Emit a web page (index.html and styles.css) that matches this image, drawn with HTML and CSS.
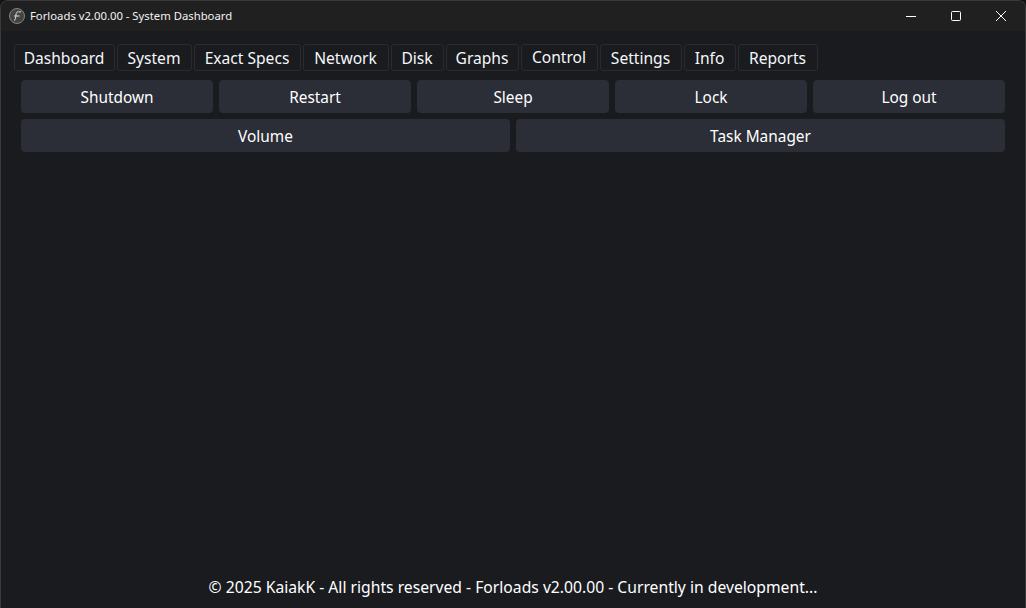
FILE: index.html
```html
<!DOCTYPE html>
<html lang="en">
<head>
<meta charset="utf-8">
<title>Forloads v2.00.00 - System Dashboard</title>
<link rel="stylesheet" href="styles.css">
</head>
<body>
<div class="window">
  <header class="titlebar">
    <svg class="app-icon" viewBox="0 0 16 16" width="16" height="16" aria-hidden="true">
      <circle cx="8" cy="8" r="7.5" fill="#444" stroke="#858585" stroke-width="1"/>
      <path d="M5 12.5C6 12.2 6.3 11.5 6.5 10.4L7.2 5.6C7.4 4.4 8 3.8 9.2 3.8H12.2M5.2 8H10.6" fill="none" stroke="#dcdcdc" stroke-width="1"/>
    </svg>
    <span class="title">Forloads v2.00.00 - System Dashboard</span>
    <div class="controls">
      <span class="control">
        <svg viewBox="0 0 12 12" width="12" height="12" aria-hidden="true"><path d="M1 6.5H11" stroke="#fff" stroke-width="1"/></svg>
      </span>
      <span class="control">
        <svg viewBox="0 0 12 12" width="12" height="12" aria-hidden="true"><rect x="1.5" y="1.5" width="9" height="9" rx="1" fill="none" stroke="#fff" stroke-width="1"/></svg>
      </span>
      <span class="control">
        <svg viewBox="0 0 12 12" width="12" height="12" aria-hidden="true"><path d="M1 1 11 11M11 1 1 11" stroke="#fff" stroke-width="1"/></svg>
      </span>
    </div>
  </header>
  <main class="content">
    <nav class="tabs">
      <span class="tab">Dashboard</span>
      <span class="tab">System</span>
      <span class="tab">Exact Specs</span>
      <span class="tab">Network</span>
      <span class="tab">Disk</span>
      <span class="tab">Graphs</span>
      <span class="tab tab-active">Control</span>
      <span class="tab">Settings</span>
      <span class="tab">Info</span>
      <span class="tab">Reports</span>
    </nav>
    <section class="actions">
      <div class="row row-five">
        <button class="btn">Shutdown</button>
        <button class="btn">Restart</button>
        <button class="btn">Sleep</button>
        <button class="btn">Lock</button>
        <button class="btn">Log out</button>
      </div>
      <div class="row row-two">
        <button class="btn">Volume</button>
        <button class="btn">Task Manager</button>
      </div>
    </section>
    <footer class="footer">© 2025 KaiakK - All rights reserved - Forloads v2.00.00 - Currently in development...</footer>
  </main>
</div>
</body>
</html>
```

FILE: styles.css
```css
* { box-sizing: border-box; }
html, body { margin: 0; height: 100%; background: #111214; overflow: hidden; }
body { font-family: "Noto Sans", "Open Sans", sans-serif; color: #fff; }

.window {
  height: 608px;
  display: flex;
  flex-direction: column;
  background: #1a1b1f;
  border: 1px solid #3a3a3c;
  border-bottom: 0;
  border-radius: 8px 8px 0 0;
  overflow: hidden;
}

.titlebar {
  height: 30px;
  flex: none;
  display: flex;
  align-items: center;
  background: #202020;
  padding-left: 8px;
}
.app-icon { flex: none; margin-right: 5px; }
.title { font-size: 11.3px; color: #f2f2f2; padding-bottom: 2px; }
.controls { margin-left: auto; display: flex; padding-right: 2px; }
.control {
  width: 45px;
  height: 30px;
  display: flex;
  align-items: center;
  justify-content: center;
}

.content {
  flex: 1;
  display: flex;
  flex-direction: column;
  padding: 13px 20px 10px 13px;
}

.tabs {
  display: grid;
  grid-template-columns: 101px 75px 107px 86px 53px 73px 77px 82px 52px 80px;
  justify-content: start;
  gap: 2px;
  height: 27px;
}
.tab {
  display: flex;
  align-items: center;
  justify-content: center;
  border: 1px solid #2a2b30;
  border-radius: 3px;
  font-size: 15.6px;
  color: #f4f7fa;
  padding: 1px 1px 0 0;
  white-space: nowrap;
}
.tab-active { padding: 0 1px 1px 0; }

.actions {
  display: flex;
  flex-direction: column;
  gap: 6px;
  margin: 9px 0 0 7px;
}
.row { display: grid; gap: 6px; }
.row-five { grid-template-columns: repeat(5, 1fr); }
.row-two { grid-template-columns: repeat(2, 1fr); }
.btn {
  height: 33px;
  border: 0;
  border-radius: 4px;
  background: #2b2d37;
  color: #fff;
  font: 400 15.4px "Noto Sans", "Open Sans", sans-serif;
  padding: 2px 0 0;
}

.footer {
  margin-top: auto;
  padding-left: 7px;
  text-align: center;
  font-size: 15.7px;
}
```
